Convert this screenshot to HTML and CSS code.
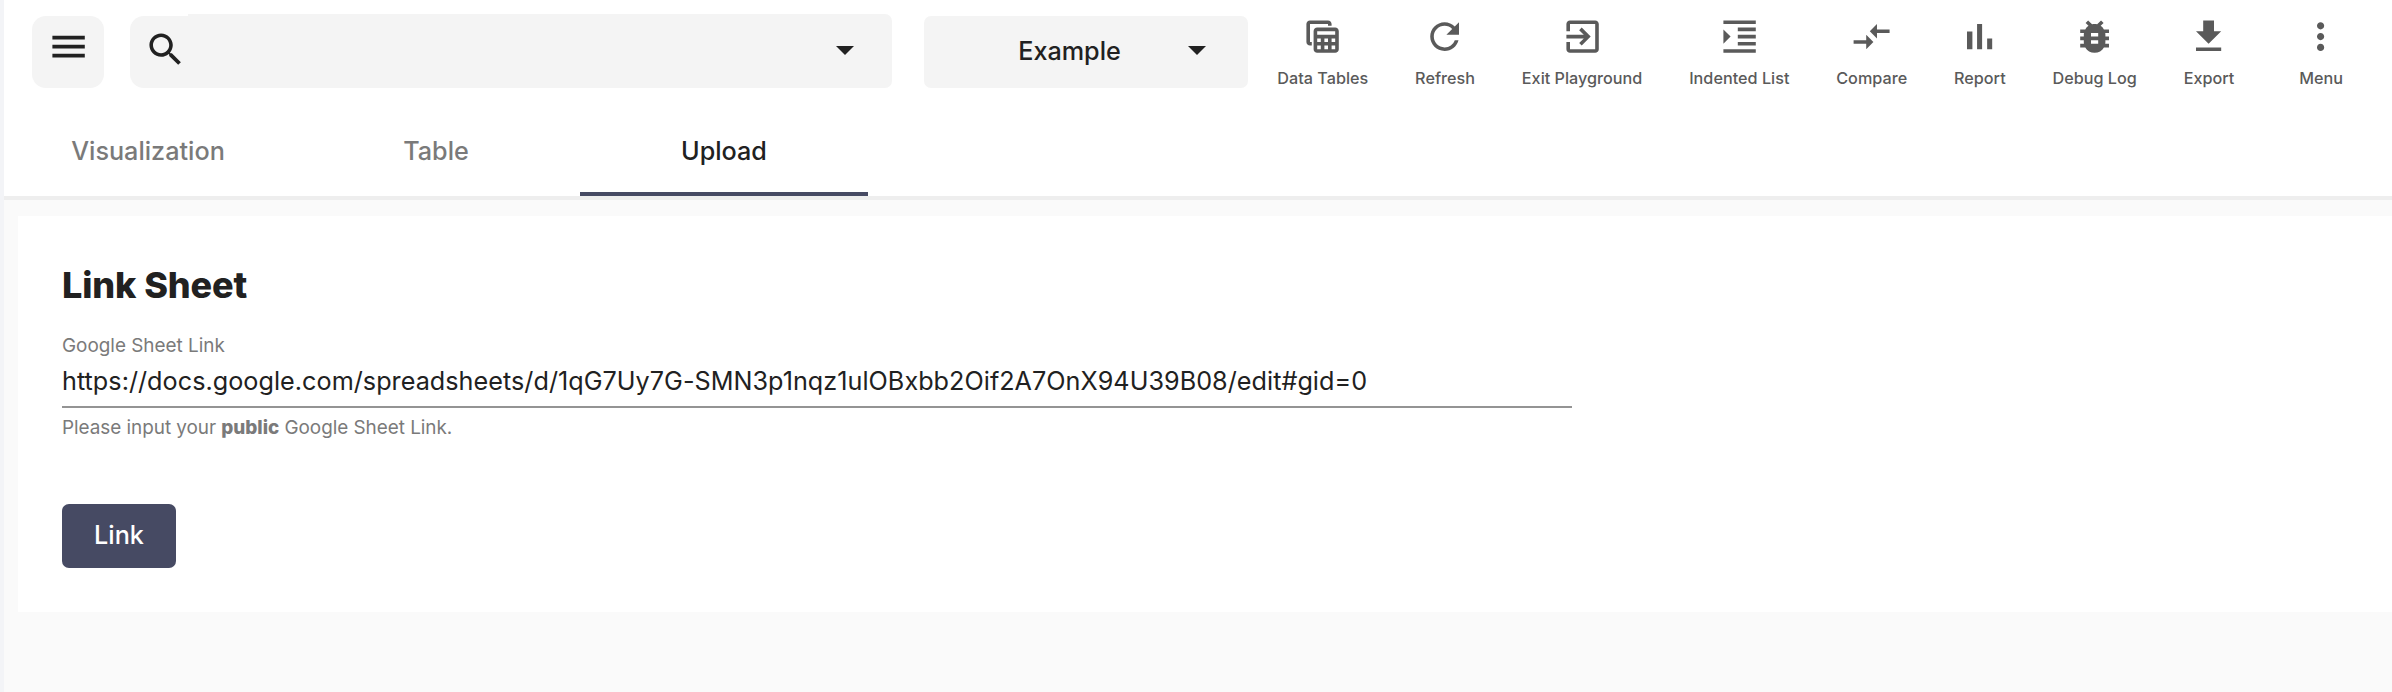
FILE: index.html
```html
<!DOCTYPE html>
<html lang="en">
<head>
<meta charset="utf-8">
<title>Link Sheet</title>
<link rel="stylesheet" href="styles.css">
</head>
<body>
<div class="app">
  <header class="toolbar">
    <button class="menu-button" aria-label="Open menu">
      <svg class="icon" viewBox="0 0 24 24"><path d="M3 18h18v-2H3v2zm0-5h18v-2H3v2zm0-7v2h18V6H3z"/></svg>
    </button>
    <div class="search">
      <div class="search-icon">
        <svg class="icon" viewBox="0 0 24 24"><path d="M15.5 14h-.79l-.28-.27C15.41 12.59 16 11.11 16 9.5 16 5.91 13.09 3 9.5 3S3 5.91 3 9.5 5.91 16 9.5 16c1.61 0 3.09-.59 4.23-1.57l.27.28v.79l5 4.99L20.49 19l-4.99-5zm-6 0C7.01 14 5 11.99 5 9.5S7.01 5 9.5 5 14 7.01 14 9.5 11.99 14 9.5 14z"/></svg>
      </div>
      <div class="search-field"><span class="caret"></span></div>
    </div>
    <div class="select"><span class="select-value">Example</span><span class="caret"></span></div>
    <nav class="actions">
      <button class="action">
        <svg class="icon" viewBox="0 0 24 24"><path d="M19 7H9c-1.1 0-2 .9-2 2v10c0 1.1.9 2 2 2h10c1.1 0 2-.9 2-2V9c0-1.1-.9-2-2-2zm0 2v2H9V9h10zm-6 6v-2h2v2h-2zm2 2v2h-2v-2h2zm-4-2H9v-2h2v2zm6-2h2v2h-2v-2zm-8 4h2v2H9v-2zm8 2v-2h2v2h-2zM6 17H5c-1.1 0-2-.9-2-2V5c0-1.1.9-2 2-2h10c1.1 0 2 .9 2 2v1h-2V5H5v10h1v2z"/></svg>
        <span>Data Tables</span>
      </button>
      <button class="action">
        <svg class="icon" viewBox="0 0 24 24"><path d="M17.65 6.35C16.2 4.9 14.21 4 12 4c-4.42 0-7.99 3.58-7.99 8s3.57 8 7.99 8c3.73 0 6.84-2.55 7.73-6h-2.08c-.82 2.33-3.04 4-5.65 4-3.31 0-6-2.69-6-6s2.69-6 6-6c1.66 0 3.14.69 4.22 1.78L13 11h7V4l-2.35 2.35z"/></svg>
        <span>Refresh</span>
      </button>
      <button class="action">
        <svg class="icon" viewBox="0 0 24 24"><path d="M10.09 15.59L11.5 17l5-5-5-5-1.41 1.41L12.67 11H3v2h9.67l-2.58 2.59zM19 3H5c-1.11 0-2 .9-2 2v4h2V5h14v14H5v-4H3v4c0 1.1.89 2 2 2h14c1.1 0 2-.9 2-2V5c0-1.1-.9-2-2-2z"/></svg>
        <span>Exit Playground</span>
      </button>
      <button class="action">
        <svg class="icon" viewBox="0 0 24 24"><path d="M3 21h18v-2H3v2zM3 8v8l4-4-4-4zm8 9h10v-2H11v2zM3 3v2h18V3H3zm8 6h10V7H11v2zm0 4h10v-2H11v2z"/></svg>
        <span>Indented List</span>
      </button>
      <button class="action">
        <svg class="icon" viewBox="0 0 24 24"><path d="M9.01 14H2v2h7.01v3L13 15l-3.99-4v3zm5.98-1v-3H22V8h-7.01V5L11 9l3.99 4z"/></svg>
        <span>Compare</span>
      </button>
      <button class="action">
        <svg class="icon" viewBox="0 0 24 24"><path d="M5 9.2h3V19H5zM10.6 5h2.8v14h-2.8zm5.6 8H19v6h-2.8z"/></svg>
        <span>Report</span>
      </button>
      <button class="action">
        <svg class="icon" viewBox="0 0 24 24"><path d="M20 8h-2.81c-.45-.78-1.07-1.45-1.82-1.96L17 4.41 15.59 3l-2.17 2.17C12.96 5.06 12.49 5 12 5c-.49 0-.96.06-1.41.17L8.41 3 7 4.41l1.62 1.63C7.88 6.55 7.26 7.22 6.81 8H4v2h2.09c-.05.33-.09.66-.09 1v1H4v2h2v1c0 .34.04.67.09 1H4v2h2.81c1.04 1.79 2.97 3 5.19 3s4.15-1.21 5.19-3H20v-2h-2.09c.05-.33.09-.66.09-1v-1h2v-2h-2v-1c0-.34-.04-.67-.09-1H20V8zm-6 8h-4v-2h4v2zm0-4h-4v-2h4v2z"/></svg>
        <span>Debug Log</span>
      </button>
      <button class="action">
        <svg class="icon" viewBox="0 0 24 24"><path d="M19 9h-4V3H9v6H5l7 7 7-7zM5 18v2h14v-2H5z"/></svg>
        <span>Export</span>
      </button>
      <button class="action action-more">
        <svg class="icon" viewBox="0 0 24 24"><path d="M12 8c1.1 0 2-.9 2-2s-.9-2-2-2-2 .9-2 2 .9 2 2 2zm0 2c-1.1 0-2 .9-2 2s.9 2 2 2 2-.9 2-2-.9-2-2-2zm0 6c-1.1 0-2 .9-2 2s.9 2 2 2 2-.9 2-2-.9-2-2-2z"/></svg>
        <span>Menu</span>
      </button>
    </nav>
  </header>
  <div class="tabs" role="tablist">
    <div class="tab" role="tab">Visualization</div>
    <div class="tab" role="tab">Table</div>
    <div class="tab tab-active" role="tab">Upload</div>
  </div>
  <main class="content">
    <section class="card">
      <h1 class="title">Link Sheet</h1>
      <div class="field">
        <div class="field-label">Google Sheet Link</div>
        <div class="field-value">https://docs.google.com/spreadsheets/d/1qG7Uy7G-SMN3p1nqz1ulOBxbb2Oif2A7OnX94U39B08/edit#gid=0</div>
        <div class="field-hint">Please input your <b>public</b> Google Sheet Link.</div>
      </div>
      <button class="submit">Link</button>
    </section>
  </main>
</div>
</body>
</html>
```
FILE: styles.css
```css
* { box-sizing: border-box; }

body {
  margin: 0;
  background: #fafafa;
  color: #212121;
  font-family: Inter, sans-serif;
  font-size: 25.2px;
  font-optical-sizing: none;
}

button {
  margin: 0;
  padding: 0;
  border: 0;
  background: none;
  color: inherit;
  font: inherit;
}

.app {
  height: 692px;
  border-left: 4px solid #f3f4f7;
  overflow: hidden;
}

.icon {
  display: block;
  flex: none;
  width: 43.2px;
  height: 43.2px;
  fill: currentColor;
}

.toolbar {
  display: flex;
  align-items: flex-start;
  height: 106px;
  padding: 14px 0 0 28px;
  background: #fff;
}

.menu-button {
  display: flex;
  justify-content: center;
  width: 72px;
  height: 72px;
  margin: 2px 26px 0 0;
  padding: 8.8px 0 0 1.2px;
  border-radius: 14px;
  background: #f4f4f4;
}

.search {
  display: flex;
  align-items: flex-end;
  width: 762px;
  height: 74px;
  margin-right: 32px;
}

.search-icon {
  width: 58px;
  height: 72px;
  padding: 12.3px 0 0 13.9px;
  border-radius: 14px 0 0 14px;
  background: #f4f4f4;
}

.search-field {
  display: flex;
  flex: 1;
  justify-content: flex-end;
  height: 74px;
  padding: 32px 38px 0 0;
  border-radius: 0 7px 7px 0;
  background: #f4f4f4;
}

.caret {
  width: 18px;
  height: 9px;
  border: solid transparent;
  border-width: 9px 9px 0;
  border-top-color: #212121;
}

.select {
  display: flex;
  width: 324px;
  height: 72px;
  margin: 2px 29.3px 0 0;
  padding-right: 42px;
  border-radius: 7px;
  background: #f4f4f4;
}

.select .caret { margin-top: 30px; }

.select-value {
  flex: 1;
  padding-left: 27px;
  font-weight: 500;
  line-height: 70px;
  text-align: center;
}

.actions {
  display: flex;
  gap: 46.8px;
  color: #5a5a5a;
}

.action {
  display: flex;
  flex-direction: column;
  align-items: center;
  padding-top: .8px;
  font-size: 16.2px;
  font-weight: 500;
  letter-spacing: .014px;
  line-height: 20px;
  white-space: nowrap;
}

.action span { margin-top: 10px; }

.action-more { margin-left: 18px; }

.tabs {
  display: flex;
  height: 94px;
  border-bottom: 4px solid #eee;
  background: #fff;
}

.tab {
  width: 288px;
  height: 90px;
  color: #7a7a7a;
  font-weight: 500;
  line-height: 90px;
  text-align: center;
}

.tab-active {
  border-bottom: 4px solid #464a63;
  color: #212121;
}

.content { padding: 16px 0 0 14px; }

.card {
  height: 396px;
  padding: 47px 44px 0;
  background: #fff;
}

.title {
  margin: 0;
  font-size: 36px;
  font-weight: 800;
  letter-spacing: -.1px;
  line-height: 44px;
}

.field {
  width: 1510px;
  margin-top: 27px;
}

.field-label {
  color: #7a7a7a;
  font-size: 18.9px;
  line-height: 24px;
}

.field-value {
  height: 52px;
  margin-top: -2px;
  border-bottom: 2px solid #949494;
  letter-spacing: .03px;
  line-height: 50px;
  white-space: nowrap;
}

.field-hint {
  margin-top: 8px;
  color: #7a7a7a;
  font-size: 18.9px;
  letter-spacing: -.03px;
  line-height: 24px;
}

.field-hint b { font-weight: 800; }

.submit {
  display: block;
  width: 114px;
  height: 64px;
  margin-top: 64px;
  border-radius: 7px;
  background: #464a63;
  color: #fff;
  font-weight: 500;
  line-height: 60px;
  padding-bottom: 2px;
}
```
